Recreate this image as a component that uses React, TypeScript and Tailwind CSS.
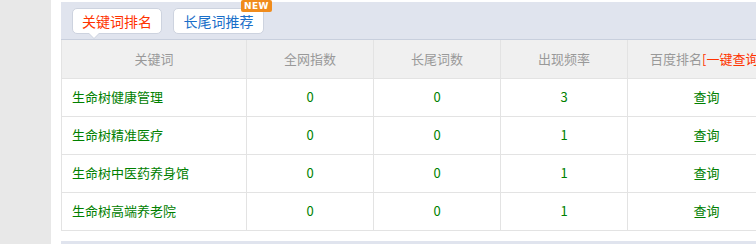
const rows = [
  { kw: '生命树健康管理', all: 0, tail: 0, freq: 3 },
  { kw: '生命树精准医疗', all: 0, tail: 0, freq: 1 },
  { kw: '生命树中医药养身馆', all: 0, tail: 0, freq: 1 },
  { kw: '生命树高端养老院', all: 0, tail: 0, freq: 1 },
]

export default function App() {
  return (
    <div
      className="flex w-[756px] h-[244px] overflow-hidden bg-white"
      style={{ fontFamily: '"Noto Sans CJK SC", "Microsoft YaHei", sans-serif' }}
    >
      <div className="w-[51px] shrink-0 bg-[#e8e8e8]" />
      <div className="ml-[10px] flex-1 min-w-0 pt-[2px] overflow-hidden">
        {/* tab bar */}
        <div className="relative h-[38px] bg-[#e0e4ee] border-b border-[#c8cfdd] flex items-start gap-[11px] pl-[11px] pt-[6px]">
          <div className="relative h-[26px] w-[90px] rounded-[5px] bg-white border border-[#cdd3df] flex items-center justify-center text-[14px] leading-none text-[#ff3300]">
            关键词排名
            <span className="absolute left-[15px] -bottom-[6px] w-0 h-0 border-l-[6px] border-r-[6px] border-t-[6px] border-l-transparent border-r-transparent border-t-[#cdd3df]" />
            <span className="absolute left-[16px] -bottom-[5px] w-0 h-0 border-l-[5px] border-r-[5px] border-t-[5px] border-l-transparent border-r-transparent border-t-white" />
          </div>
          <div className="relative h-[26px] w-[91px] rounded-[5px] bg-white border border-[#cdd3df] flex items-center justify-center text-[14px] leading-none text-[#1a6fc9]">
            长尾词推荐
            <span className="absolute -right-[9px] -top-[9px] h-[12px] px-[3px] rounded-[2px] bg-[#f08c1c] text-white text-[9px] font-bold leading-[12px] tracking-[0.5px]" style={{ fontFamily: '"DejaVu Sans", sans-serif' }}>
              NEW
            </span>
          </div>
        </div>
        {/* table */}
        <table className="border-collapse text-[13px] table-fixed w-[724px]">
          <colgroup>
            <col className="w-[185px]" />
            <col className="w-[127px]" />
            <col className="w-[127px]" />
            <col className="w-[127px]" />
            <col className="w-[158px]" />
          </colgroup>
          <thead>
            <tr className="h-[38px] bg-[#f0f0f0] text-[#999999]">
              <th className="font-normal border-x border-[#e3e3e3]">关键词</th>
              <th className="font-normal border-x border-[#e3e3e3]">全网指数</th>
              <th className="font-normal border-x border-[#e3e3e3]">长尾词数</th>
              <th className="font-normal border-x border-[#e3e3e3]">出现频率</th>
              <th className="font-normal border-x border-[#e3e3e3] whitespace-nowrap">
                百度排名<span className="text-[#ff3300]">[一键查询]</span>
              </th>
            </tr>
          </thead>
          <tbody className="text-[#008000]">
            {rows.map((r) => (
              <tr key={r.kw} className="h-[38px]">
                <td className="border border-[#e3e3e3] pl-[10px]">{r.kw}</td>
                <td className="border border-[#e3e3e3] text-center">{r.all}</td>
                <td className="border border-[#e3e3e3] text-center">{r.tail}</td>
                <td className="border border-[#e3e3e3] text-center">{r.freq}</td>
                <td className="border border-[#e3e3e3] text-center">查询</td>
              </tr>
            ))}
          </tbody>
        </table>
        <div className="mt-[10px] h-[10px] bg-[#e0e4ee]" />
      </div>
    </div>
  )
}
